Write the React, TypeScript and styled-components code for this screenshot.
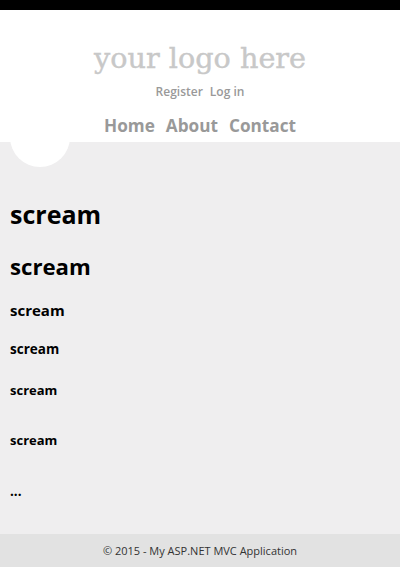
import React from "react";
import styled, { createGlobalStyle } from "styled-components";

const Global = createGlobalStyle`
  html, body { margin: 0; padding: 0; }
  body {
    background: #fff;
    color: #000;
    font-family: "Open Sans", "Noto Sans", sans-serif;
  }
`;

const Page = styled.div`
  display: flex;
  flex-direction: column;
  min-height: 567px;
  border-top: 10px solid #000;
  box-sizing: border-box;
`;

const Header = styled.header`
  display: flex;
  flex-direction: column;
  align-items: center;
  padding: 33px 0 4px;
  background: #fff;
`;

const SiteTitle = styled.div`
  font-family: "DejaVu Serif", "Liberation Serif", serif;
  font-size: 28.7px;
  line-height: 30px;
  color: #c8c8c8;
  -webkit-text-stroke: 0.4px #c8c8c8;
`;

const LoginLinks = styled.nav`
  display: flex;
  gap: 7px;
  margin-top: 11px;
  font-size: 12px;
  line-height: 16px;
  font-weight: 600;
  color: #999;
`;

const Menu = styled.nav`
  display: flex;
  gap: 11px;
  margin-top: 14px;
  font-size: 17.2px;
  line-height: 24px;
  font-weight: 700;
  color: #999;
`;

const Link = styled.span`
  cursor: pointer;
`;

const Main = styled.main`
  position: relative;
  flex: 1;
  display: flex;
  flex-direction: column;
  align-items: flex-start;
  padding: 56px 10px 34px;
  background: #efeeef;
`;

const Bubble = styled.div`
  position: absolute;
  left: 10px;
  top: -35px;
  width: 60px;
  height: 60px;
  border-radius: 50%;
  background: #fff;
`;

const Heading = styled.div<{ $size: number; $lh: number; $gap: number; $weight: number }>`
  margin: ${(p) => p.$gap}px 0 0;
  font-size: ${(p) => p.$size}px;
  line-height: ${(p) => p.$lh}px;
  font-weight: ${(p) => p.$weight};
  color: #000;
`;

const Footer = styled.footer`
  height: 33px;
  line-height: 33px;
  text-align: center;
  background: #e2e2e2;
  color: #333;
  font-size: 11px;
`;

export default function App() {
  return (
    <>
      <Global />
      <Page>
        <Header>
          <SiteTitle>your logo here</SiteTitle>
          <LoginLinks>
            <Link>Register</Link>
            <Link>Log in</Link>
          </LoginLinks>
          <Menu>
            <Link>Home</Link>
            <Link>About</Link>
            <Link>Contact</Link>
          </Menu>
        </Header>
        <Main>
          <Bubble />
          <Heading as="h1" $size={25} $lh={32} $gap={0} $weight={700}>scream</Heading>
          <Heading as="h2" $size={22.2} $lh={28} $gap={23} $weight={700}>scream</Heading>
          <Heading as="h3" $size={15} $lh={20} $gap={19} $weight={700}>scream</Heading>
          <Heading as="h4" $size={13.5} $lh={18} $gap={20} $weight={700}>scream</Heading>
          <Heading as="h5" $size={13} $lh={18} $gap={23} $weight={700}>scream</Heading>
          <Heading as="h6" $size={13} $lh={18} $gap={32} $weight={700}>scream</Heading>
          <Heading as="p" $size={13.5} $lh={18} $gap={33} $weight={700}>...</Heading>
        </Main>
        <Footer>© 2015 - My ASP.NET MVC Application</Footer>
      </Page>
    </>
  );
}
